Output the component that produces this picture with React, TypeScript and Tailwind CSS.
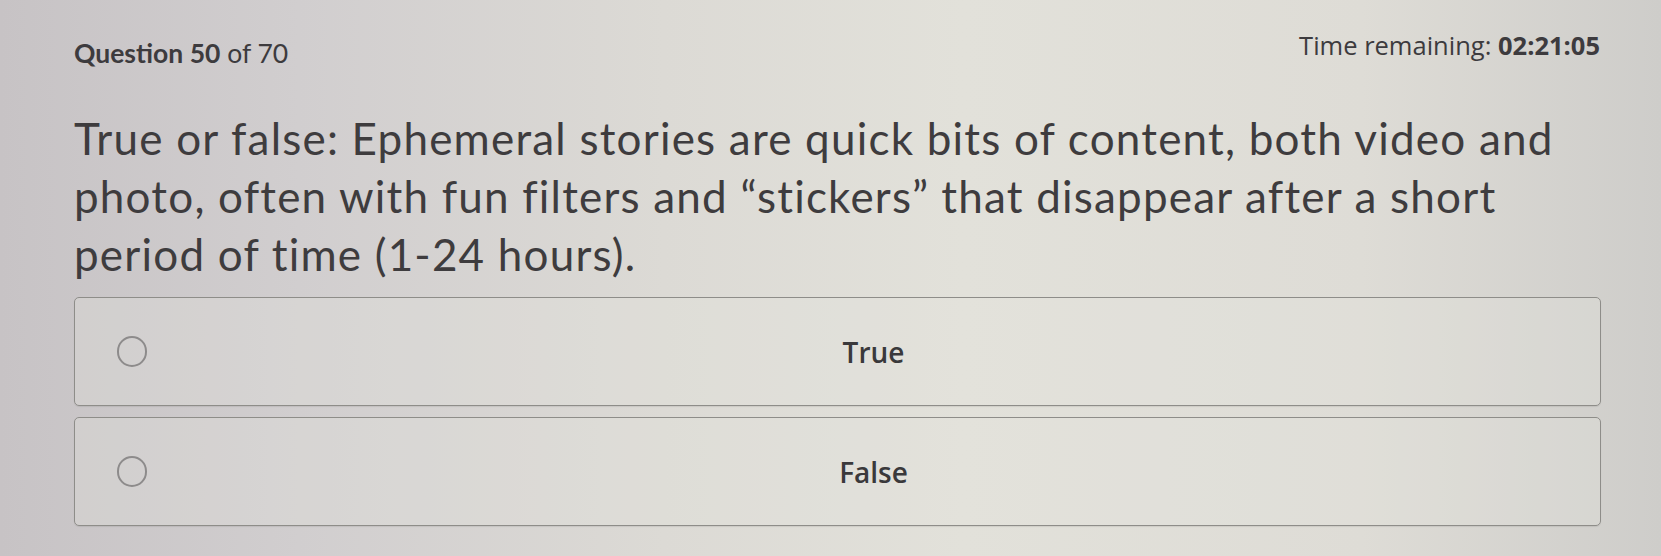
import React from "react";

function Option({ label }: { label: string }) {
  return (
    <div className="flex h-[109px] items-center rounded-[5px] border-[1.5px] border-[#8e8d89] bg-[#e6e5df]/30 shadow-[0_1px_1px_rgba(0,0,0,0.08)]">
      <div className="ml-[42px] h-[31px] w-[30px] shrink-0 rounded-full border-[2px] border-[#8d8b8b]" />
      <div className="flex flex-1 justify-center text-[28px] font-semibold text-[#3a393b] [font-family:'Open_Sans',sans-serif]">
        {label}
      </div>
    </div>
  );
}

export default function App() {
  return (
    <div className="h-[556px] w-[1661px] overflow-hidden bg-[linear-gradient(90deg,#c7c3c5_0%,#d1cecf_18%,#dcdad5_40%,#e2e1da_58%,#dedcd6_82%,#cecdca_100%)]">
      <div className="pl-[74px] pt-[29px]">
        <div className="flex w-[1526px] items-start justify-between">
          <div className="mt-[8px] text-[26.5px] leading-[32px] text-[#3d3b3e] [font-family:'Lato',sans-serif]">
            <span className="font-bold">Question 50</span> of 70
          </div>
          <div className="text-[25.5px] leading-[32px] text-[#3d3b3e] [font-family:'Open_Sans',sans-serif]">
            Time remaining: <span className="font-bold">02:21:05</span>
          </div>
        </div>
        <div className="mt-[40px] whitespace-nowrap text-[44px] leading-[58px] tracking-[1.2px] text-[#3e3c3e] [font-family:'Lato',sans-serif]">
          True or false: Ephemeral stories are quick bits of content, both video and
          <br />
          photo, often with fun filters and “stickers” that disappear after a short
          <br />
          period of time (1-24 hours).
        </div>
        <div className="mt-[14px] flex w-[1527px] flex-col gap-[11px]">
          <Option label="True" />
          <Option label="False" />
        </div>
      </div>
    </div>
  );
}
